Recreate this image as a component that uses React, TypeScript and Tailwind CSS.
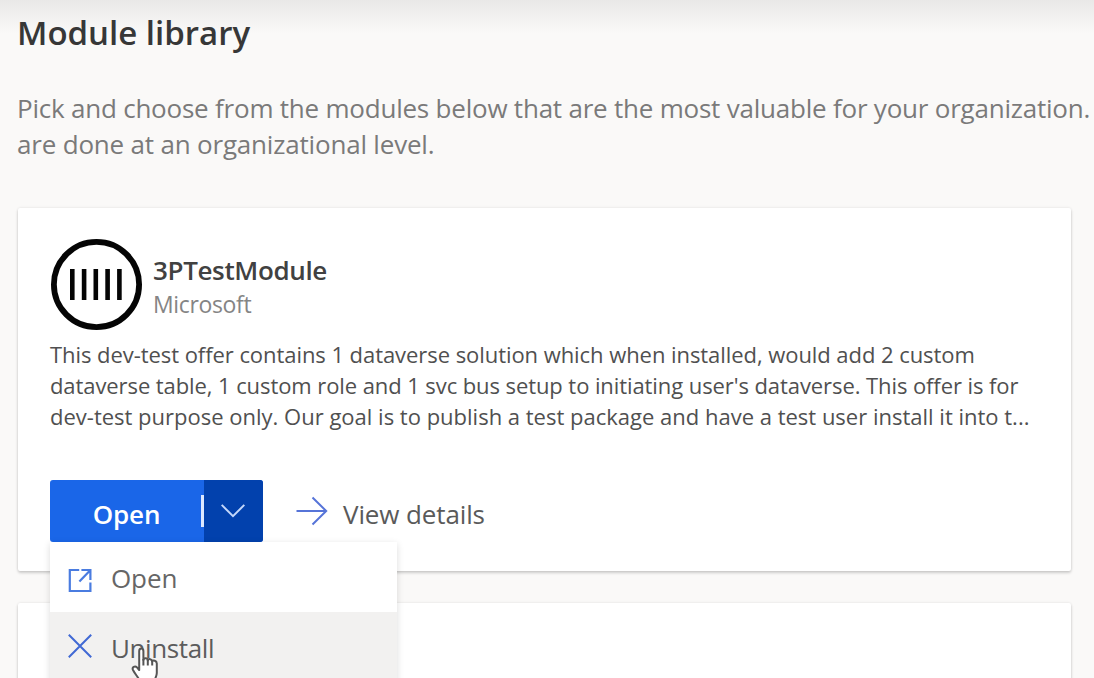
function ModuleLogo() {
  return (
    <svg viewBox="0 0 92 92" className="h-[92px] w-[92px] shrink-0" fill="none" stroke="#050505">
      <circle cx="46.5" cy="45.5" r="42.6" strokeWidth="5.8" />
      <path d="M22.3 30v31M34.1 30v31M45.8 30v31M57.6 30v31M69.4 30v31" strokeWidth="4.6" />
    </svg>
  );
}

function ChevronDown() {
  return (
    <svg viewBox="0 0 24 14" className="mr-[2px] h-[14px] w-6" fill="none" stroke="#c3d7fb" strokeWidth="2">
      <path d="M0.7 0.9 12 12.2 23.3 0.9" />
    </svg>
  );
}

function ArrowRight() {
  return (
    <svg viewBox="0 0 32 30" className="h-[30px] w-8 shrink-0" fill="none" stroke="#5674d8" strokeWidth="2">
      <path d="M0.5 15H30.5M16.5 1.5 30.2 15 16.5 28.5" />
    </svg>
  );
}

function OpenExternal() {
  return (
    <svg viewBox="0 0 24 24" className="h-6 w-6 shrink-0" fill="none" stroke="#4a7ce0" strokeWidth="2.2">
      <path d="M11.2 2H1.8v21H22.4V14.5" />
      <path d="M13.4 2h9v10M22 2.4 11.4 13.6" />
    </svg>
  );
}

function Cross() {
  return (
    <svg viewBox="0 0 24 24" className="h-6 w-6 shrink-0" fill="none" stroke="#4169d4" strokeWidth="2">
      <path d="M0.8 0.8 23.2 23.2M23.2 0.8 0.8 23.2" />
    </svg>
  );
}

function HandCursor() {
  return (
    <svg
      viewBox="0 0 30 38"
      className="absolute top-[35px] left-[81px] h-[38px] w-[30px]"
      fill="#fff"
      stroke="#555"
      strokeWidth="2"
      strokeLinejoin="round"
    >
      <path d="M8.2 21V4.2C8.2 0.6 12.4 0.6 12.4 4.2V13C12.6 10.6 16.6 10.8 16.8 13.4 17.4 11.4 21 11.8 21.2 14.4 22 12.8 25.8 13.4 25.8 16.4V26C25.8 30 23 32 23 37H10C9 32 4.5 28 2 23 0.6 20 4 18.4 6 20.4L8.2 23Z" />
      <path d="M12.4 12v6.5M16.8 13v5.5M21.2 14v4.5" />
    </svg>
  );
}

function ModuleMenu() {
  return (
    <div className="absolute top-[62px] left-0 w-[347px] bg-white text-[26px] leading-9 text-[#666] shadow-[0_2px_7px_rgba(0,0,0,0.14)]">
      <div className="flex h-[70px] items-center gap-[19px] pt-[5px] pl-[18px]">
        <OpenExternal />
        <span className="pb-[3px] tracking-[-0.1px]">Open</span>
      </div>
      <div className="relative flex h-[72px] items-center gap-[19px] bg-[#f2f1f0] pb-[4px] pl-[18px]">
        <Cross />
        <span className="pt-[4px] tracking-[-0.4px] text-[#5c5c5c]">Uninstall</span>
        <HandCursor />
      </div>
    </div>
  );
}

function ModuleCard() {
  return (
    <article className="h-[363px] w-[1053px] rounded-[2px] bg-white px-8 pt-[31px] shadow-[0_2px_3px_rgba(0,0,0,0.17),0_0_3px_rgba(0,0,0,0.10)]">
      <header className="flex h-[91px] gap-[11px]">
        <ModuleLogo />
        <div className="pt-[14px]">
          <h2 className="text-[26px] leading-[34px] font-semibold tracking-[-0.36px] text-[#414141]">3PTestModule</h2>
          <p className="mt-px text-[23px] leading-8 tracking-[-0.36px] text-[#858585]">Microsoft</p>
        </div>
      </header>
      <p className="mt-[9px] text-[22px] leading-[31px] whitespace-nowrap text-[#505050]">
        <span className="block tracking-[-0.06px]">
          This dev-test offer contains 1 dataverse solution which when installed, would add 2 custom
        </span>
        <span className="block tracking-[-0.085px]">
          dataverse table, 1 custom role and 1 svc bus setup to initiating user's dataverse. This offer is for
        </span>
        <span className="block">
          dev-test purpose only. Our goal is to publish a test package and have a test user install it into t...
        </span>
      </p>
      <div className="relative mt-12 flex h-[62px] items-center">
        <div className="flex h-[62px] w-[213px] overflow-hidden rounded-[3px] bg-[#1a66e8] text-white">
          <button className="flex w-[151px] items-center justify-center pt-[5px] pl-[2px] text-[26px] leading-9 font-semibold tracking-[-0.1px]">
            Open
          </button>
          <span className="mt-[15px] h-[32px] w-[3px] bg-[#dce8ff]" />
          <button className="flex flex-1 items-center justify-center bg-[#0241ad]" aria-label="More actions">
            <ChevronDown />
          </button>
        </div>
        <button className="ml-[33px] flex items-center gap-[15px] text-[26px] leading-9 tracking-[-0.12px] text-[#5a5a5a]">
          <ArrowRight />
          <span className="pt-[5px]">View details</span>
        </button>
        <ModuleMenu />
      </div>
    </article>
  );
}

export default function App() {
  return (
    <main className="h-[678px] w-[1094px] overflow-hidden bg-[#faf9f8] bg-[linear-gradient(#e9e8e7_0,#f0efee_14px,#faf9f8_34px)] pt-[11px] pl-[18px] font-['Open_Sans','Noto_Sans',sans-serif]">
      <h1 className="-ml-px text-[33px] leading-[44px] font-semibold text-[#373737]">Module library</h1>
      <p className="mt-[35px] -ml-px text-[26px] leading-9 whitespace-nowrap text-[#7a7a7a]">
        <span className="block tracking-[-0.22px]">
          Pick and choose from the modules below that are the most valuable for your organization.
        </span>
        <span className="block tracking-[-0.19px]">are done at an organizational level.</span>
      </p>
      <section className="mt-[46px] flex flex-col gap-8">
        <div className="relative z-10">
          <ModuleCard />
        </div>
        <article className="h-[363px] w-[1053px] shrink-0 rounded-[2px] bg-white shadow-[0_2px_3px_rgba(0,0,0,0.17),0_0_3px_rgba(0,0,0,0.10)]" />
      </section>
    </main>
  );
}
